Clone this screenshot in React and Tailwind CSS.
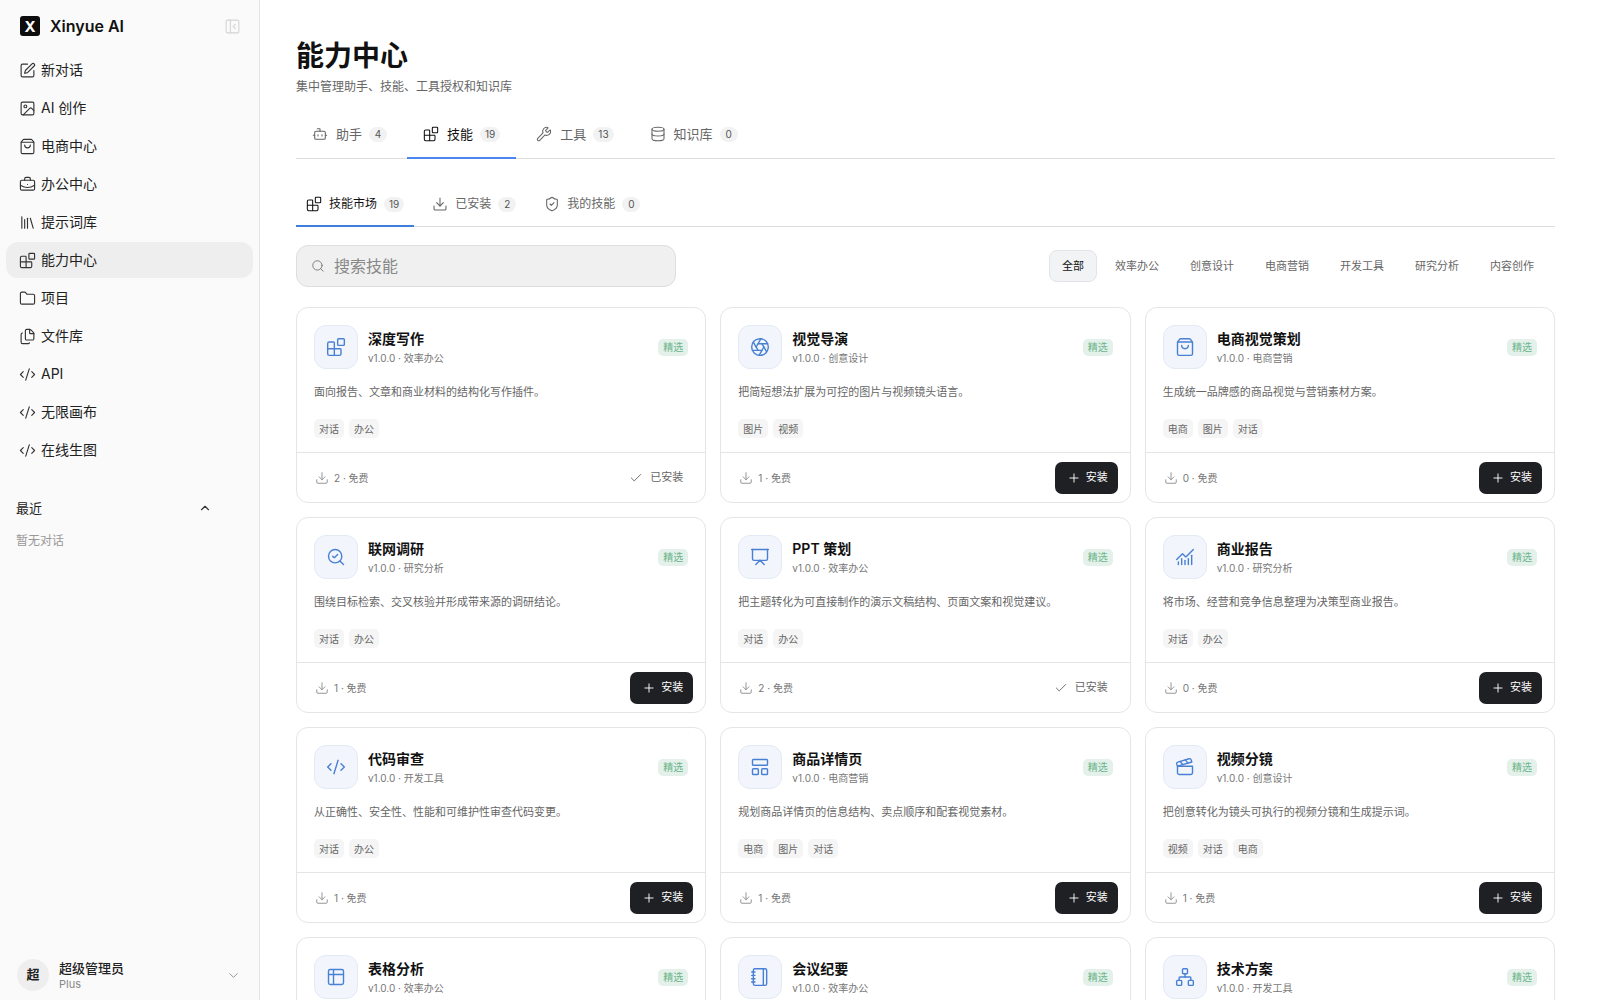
import React from "react";
import {
  SquarePen, Image as ImageIcon, ShoppingBag, BriefcaseBusiness, Library, Blocks, Folder, Files, CodeXml,
  ChevronUp, ChevronDown, PanelLeftClose, Bot, Wrench, Database, Download, ShieldCheck, Search, Check, Plus,
  Aperture, SearchCheck, Presentation, ChartNoAxesCombined, LayoutPanelTop, Clapperboard, Table2, Notebook, Network,
} from "lucide-react";

const nav = [
  [SquarePen, "新对话"],
  [ImageIcon, "AI 创作"],
  [ShoppingBag, "电商中心"],
  [BriefcaseBusiness, "办公中心"],
  [Library, "提示词库"],
  [Blocks, "能力中心", true],
  [Folder, "项目"],
  [Files, "文件库"],
  [CodeXml, "API"],
  [CodeXml, "无限画布"],
  [CodeXml, "在线生图"],
];

const cards = [
  [Blocks, "深度写作", "效率办公", "面向报告、文章和商业材料的结构化写作插件。", ["对话", "办公"], 2, true],
  [Aperture, "视觉导演", "创意设计", "把简短想法扩展为可控的图片与视频镜头语言。", ["图片", "视频"], 1, false],
  [ShoppingBag, "电商视觉策划", "电商营销", "生成统一品牌感的商品视觉与营销素材方案。", ["电商", "图片", "对话"], 0, false],
  [SearchCheck, "联网调研", "研究分析", "围绕目标检索、交叉核验并形成带来源的调研结论。", ["对话", "办公"], 1, false],
  [Presentation, "PPT 策划", "效率办公", "把主题转化为可直接制作的演示文稿结构、页面文案和视觉建议。", ["对话", "办公"], 2, true],
  [ChartNoAxesCombined, "商业报告", "研究分析", "将市场、经营和竞争信息整理为决策型商业报告。", ["对话", "办公"], 0, false],
  [CodeXml, "代码审查", "开发工具", "从正确性、安全性、性能和可维护性审查代码变更。", ["对话", "办公"], 1, false],
  [LayoutPanelTop, "商品详情页", "电商营销", "规划商品详情页的信息结构、卖点顺序和配套视觉素材。", ["电商", "图片", "对话"], 1, false],
  [Clapperboard, "视频分镜", "创意设计", "把创意转化为镜头可执行的视频分镜和生成提示词。", ["视频", "对话", "电商"], 1, false],
  [Table2, "表格分析", "效率办公", "", [], 1, false],
  [Notebook, "会议纪要", "效率办公", "", [], 1, false],
  [Network, "技术方案", "开发工具", "", [], 1, false],
];

function Count({ n }) {
  return (
    <span className="flex h-[15px] min-w-[18px] items-center justify-center rounded-full bg-[#f2f2f2] px-[5px] text-[10px] leading-none text-[#555]">
      {n}
    </span>
  );
}

function MainTab({ Icon, label, n, active }) {
  return (
    <div className={`-mb-px flex h-[48px] items-center border-b-2 px-4 ${active ? "border-[#4b86ee] text-[#111]" : "border-transparent text-[#666]"}`}>
      <Icon size={16} strokeWidth={1.6} />
      <span className="ml-2 text-[13px] leading-5">{label}</span>
      <span className="ml-[7px]"><Count n={n} /></span>
    </div>
  );
}

function SubTab({ Icon, label, n, active }) {
  return (
    <div className={`-mb-px flex h-[44px] items-center border-b-2 px-[10px] ${active ? "border-[#3f7fdc] text-[#111]" : "border-transparent text-[#666]"}`}>
      <Icon size={16} strokeWidth={1.6} />
      <span className="ml-[7px] text-[12px] leading-5">{label}</span>
      <span className="ml-[7px]"><Count n={n} /></span>
    </div>
  );
}

function Card({ Icon, title, cat, desc, tags, dl, installed }) {
  return (
    <div className="flex h-[196px] flex-col rounded-[12px] border border-[#e5e5e5] bg-white">
      <div className="h-[144px] shrink-0 px-[17px] pt-[17px]">
        <div className="flex items-center">
          <div className="flex h-[44px] w-[44px] shrink-0 items-center justify-center rounded-[12px] border border-[#e3e9f5] bg-[#f2f6fc] text-[#4a80d4]">
            <Icon size={20} strokeWidth={1.7} />
          </div>
          <div className="ml-[10px] flex-1">
            <div className="text-[14px] font-semibold leading-[20px] text-[#111]">{title}</div>
            <div className="mt-[1px] text-[10px] leading-[16px] text-[#777]">v1.0.0 · {cat}</div>
          </div>
          <span className="flex h-[17px] w-[30px] items-center justify-center rounded-[5px] bg-[#e3f1ea] text-[10px] leading-none text-[#6db58c]">精选</span>
        </div>
        <p className="mt-[15px] text-[11px] leading-[16px] text-[#666]">{desc}</p>
        <div className="mt-[19px] flex gap-[5px]">
          {tags.map((t) => (
            <span key={t} className="flex h-[19px] w-[30px] items-center justify-center rounded-[5px] bg-[#f5f5f5] text-[10px] leading-none text-[#666]">{t}</span>
          ))}
        </div>
      </div>
      <div className="flex flex-1 items-center justify-between border-t border-[#e5e5e5] pl-[18px] pr-[12px]">
        <div className="flex items-center text-[10px] leading-4 text-[#777]">
          <Download size={14} strokeWidth={1.5} className="text-[#888]" />
          <span className="ml-[5px]">{dl} · 免费</span>
        </div>
        {installed ? (
          <div className="flex h-[32px] items-center pl-3 pr-[10px] text-[11px] text-[#666]">
            <Check size={14} strokeWidth={1.6} />
            <span className="ml-[7px]">已安装</span>
          </div>
        ) : (
          <button className="flex h-[32px] items-center rounded-[7px] bg-[#1f2024] pl-3 pr-[10px] text-[11px] text-white">
            <Plus size={14} strokeWidth={1.6} />
            <span className="ml-[5px]">安装</span>
          </button>
        )}
      </div>
    </div>
  );
}

export default function App() {
  return (
    <div className="flex h-screen overflow-hidden bg-white font-['Inter','Noto_Sans_CJK_SC',sans-serif] text-[#111]">
      <aside className="flex h-full w-[260px] shrink-0 flex-col border-r border-[#e5e5e5] bg-[#fafafa]">
        <div className="flex h-[52px] items-center justify-between pl-[20px] pr-[18px]">
          <div className="flex items-center">
            <div className="flex h-[20px] w-[20px] items-center justify-center rounded-[3px] bg-[#0d0d0d] text-[15px] font-bold leading-none text-white">X</div>
            <span className="ml-[10px] text-[16px] font-semibold leading-none text-[#111]">Xinyue AI</span>
          </div>
          <PanelLeftClose size={17} strokeWidth={1.5} className="text-[#d4d4d4]" />
        </div>
        <nav className="flex flex-col gap-[2px] px-[6px]">
          {nav.map(([Icon, label, active]) => (
            <div key={label} className={`flex h-[36px] items-center rounded-[12px] pl-[13px] ${active ? "bg-[#eeeeee]" : ""}`}>
              <Icon size={17} strokeWidth={1.6} className="text-[#333]" />
              <span className="ml-[5px] text-[14px] leading-5 text-[#222]">{label}</span>
            </div>
          ))}
        </nav>
        <div className="mt-[28px] flex h-[24px] items-center justify-between pl-[16px] pr-[47px]">
          <span className="text-[13px] leading-5 text-[#222]">最近</span>
          <ChevronUp size={14} strokeWidth={2} className="text-[#333]" />
        </div>
        <div className="mt-[13px] pl-[16px] text-[12px] leading-4 text-[#999]">暂无对话</div>
        <div className="mt-auto flex h-[50px] items-center pl-[17px] pr-[18px]">
          <div className="flex h-[32px] w-[32px] items-center justify-center rounded-full bg-[#eeeeee] text-[13px] font-semibold text-[#222]">超</div>
          <div className="ml-[10px] flex-1">
            <div className="text-[13px] font-medium leading-[18px] text-[#222]">超级管理员</div>
            <div className="text-[11px] leading-[14px] text-[#888]">Plus</div>
          </div>
          <ChevronDown size={15} strokeWidth={1.6} className="text-[#999]" />
        </div>
      </aside>

      <main className="flex-1 overflow-hidden pl-[36px] pr-[45px]">
        <h1 className="pt-[36px] text-[28px] font-bold leading-[40px] text-[#111]">能力中心</h1>
        <p className="mt-[2px] text-[12px] leading-[18px] text-[#666]">集中管理助手、技能、工具授权和知识库</p>
        <div className="mt-[15px] flex h-[48px] gap-[4px] border-b border-[#dedede]">
          <MainTab Icon={Bot} label="助手" n={4} />
          <MainTab Icon={Blocks} label="技能" n={19} active />
          <MainTab Icon={Wrench} label="工具" n={13} />
          <MainTab Icon={Database} label="知识库" n={0} />
        </div>
        <div className="mt-[24px] flex h-[44px] gap-[8px] border-b border-[#dedede]">
          <SubTab Icon={Blocks} label="技能市场" n={19} active />
          <SubTab Icon={Download} label="已安装" n={2} />
          <SubTab Icon={ShieldCheck} label="我的技能" n={0} />
        </div>
        <div className="mt-[18px] flex items-center justify-between">
          <div className="flex h-[42px] w-[380px] items-center rounded-[12px] border border-[#dedede] bg-[#f0f0f0] pl-[14px]">
            <Search size={14} strokeWidth={1.6} className="text-[#777]" />
            <span className="ml-[9px] text-[16px] leading-6 text-[#888]">搜索技能</span>
          </div>
          <div className="flex gap-[5px] pr-[8px]">
            {["全部", "效率办公", "创意设计", "电商营销", "开发工具", "研究分析", "内容创作"].map((f, i) => (
              <div key={f} className={`flex h-[32px] items-center rounded-[8px] border px-3 text-[11px] leading-none ${i === 0 ? "border-[#e2e4e8] bg-[#f2f3f5] text-[#111]" : "border-transparent text-[#666]"}`}>{f}</div>
            ))}
          </div>
        </div>
        <div className="mt-[20px] grid grid-cols-3 gap-[14px]">
          {cards.map(([Icon, title, cat, desc, tags, dl, installed]) => (
            <Card key={title} Icon={Icon} title={title} cat={cat} desc={desc} tags={tags} dl={dl} installed={installed} />
          ))}
        </div>
      </main>
    </div>
  );
}
